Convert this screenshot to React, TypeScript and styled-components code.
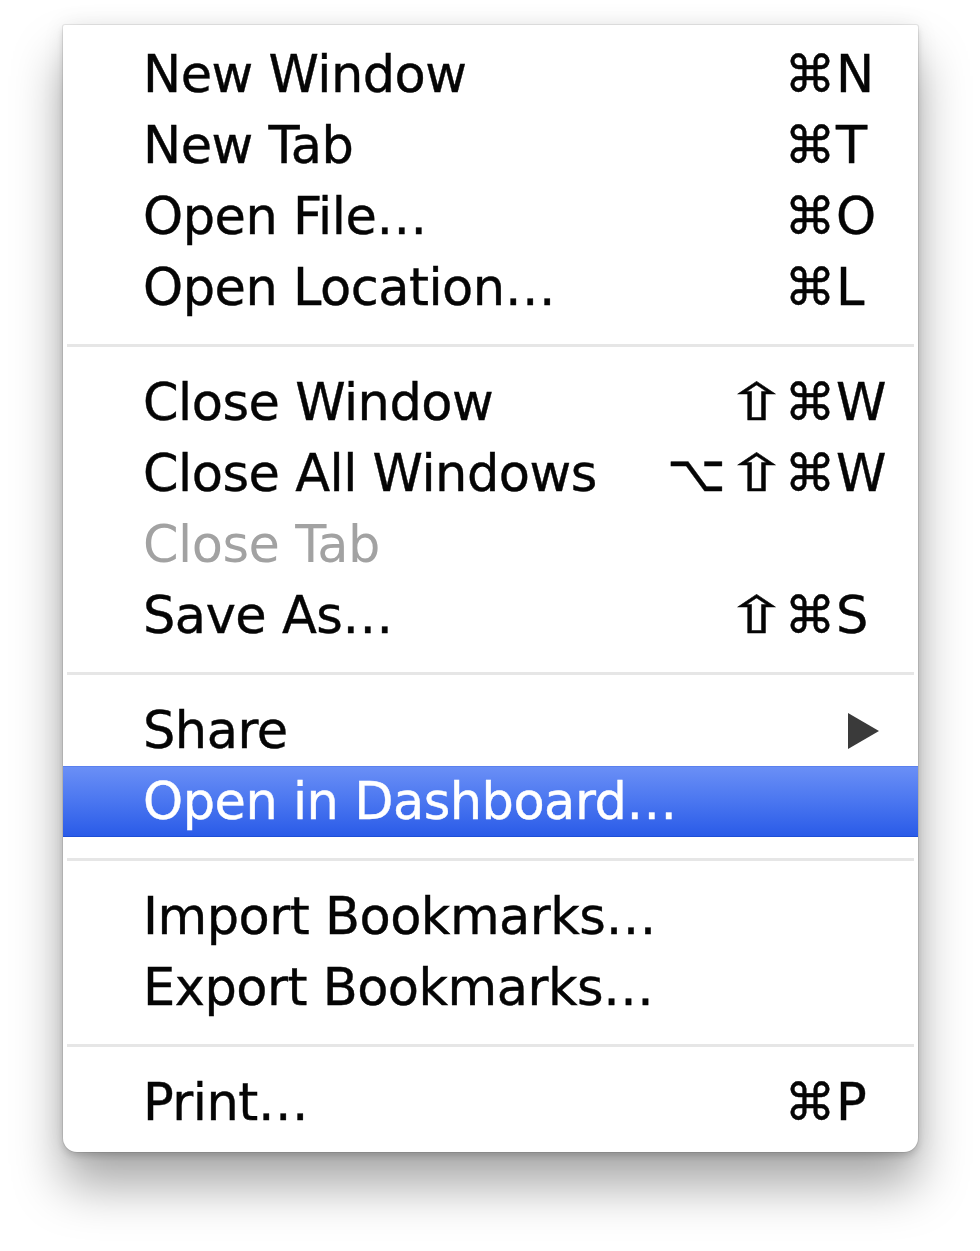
import React from "react";
import styled, { createGlobalStyle } from "styled-components";

const Global = createGlobalStyle`
  html, body { margin: 0; padding: 0; background: #ffffff; }
  body { font-family: "DejaVu Sans", "Lucida Grande", sans-serif; }
`;

const Page = styled.div`
  width: 980px;
  height: 1251px;
  padding: 25px 0 0 63px;
  box-sizing: border-box;
  background: #ffffff;
`;

const Menu = styled.div`
  width: 855px;
  box-sizing: border-box;
  padding: 14px 0 14px 0;
  background: #ffffff;
  border-radius: 2px 2px 14px 14px;
  box-shadow: 0 0 0 1px rgba(0, 0, 0, 0.08), 0 4px 6px rgba(0, 0, 0, 0.14),
    0 34px 50px rgba(0, 0, 0, 0.34), 0 0 22px rgba(0, 0, 0, 0.08);
`;

const Row = styled.div<{ $active?: boolean; $disabled?: boolean }>`
  display: flex;
  align-items: center;
  height: 71px;
  box-sizing: border-box;
  padding: 0 37px 0 80px;
  font-size: 51px;
  letter-spacing: -0.5px;
  color: ${(p) => (p.$active ? "#ffffff" : p.$disabled ? "#a2a2a2" : "#050505")};
  -webkit-text-stroke: ${(p) => (p.$disabled ? "0" : "0.4px")} currentColor;
  background: ${(p) =>
    p.$active ? "linear-gradient(#6a8ff6 0%, #4a76f0 50%, #2a5be8 100%)" : "transparent"};
  border-top: ${(p) => (p.$active ? "1px solid #5a80ee" : "none")};
  border-bottom: ${(p) => (p.$active ? "1px solid #1d4ed6" : "none")};
`;

const Label = styled.span`
  flex: 1;
  white-space: nowrap;
`;

const Mods = styled.span`
  white-space: nowrap;
  display: flex;
  align-items: center;
  gap: 2px;
`;

const Mod = styled.span<{ $wide?: boolean }>`
  display: inline-block;
  transform: ${(p) => (p.$wide ? "scaleX(1.5)" : "none")};
  margin: ${(p) => (p.$wide ? "0 5px 0 8px" : "0")};
`;

const Key = styled.span`
  width: 45px;
  margin-left: 1px;
  white-space: nowrap;
  display: flex;
  align-items: center;
`;

const Separator = styled.div`
  height: 44px;
  display: flex;
  align-items: center;
  padding: 0 4px;
  &::after {
    content: "";
    flex: 1;
    height: 3px;
    background: #e6e6e6;
  }
`;

const Arrow = styled.svg`
  width: 31px;
  height: 36px;
  margin-left: 12px;
`;

type Item = {
  label: string;
  mods?: string;
  key?: string;
  disabled?: boolean;
  active?: boolean;
  submenu?: boolean;
};

const groups: Item[][] = [
  [
    { label: "New Window", mods: "⌘", key: "N" },
    { label: "New Tab", mods: "⌘", key: "T" },
    { label: "Open File…", mods: "⌘", key: "O" },
    { label: "Open Location…", mods: "⌘", key: "L" },
  ],
  [
    { label: "Close Window", mods: "⇧⌘", key: "W" },
    { label: "Close All Windows", mods: "⌥⇧⌘", key: "W" },
    { label: "Close Tab", disabled: true },
    { label: "Save As…", mods: "⇧⌘", key: "S" },
  ],
  [
    { label: "Share", submenu: true },
    { label: "Open in Dashboard…", active: true },
  ],
  [
    { label: "Import Bookmarks…" },
    { label: "Export Bookmarks…" },
  ],
  [{ label: "Print…", mods: "⌘", key: "P" }],
];

export default function App() {
  return (
    <>
      <Global />
      <Page>
        <Menu>
          {groups.map((g, gi) => (
            <React.Fragment key={gi}>
              {gi > 0 && <Separator />}
              {g.map((it) => (
                <Row key={it.label} $active={it.active} $disabled={it.disabled}>
                  <Label>{it.label}</Label>
                  <Mods>
                    {Array.from(it.mods ?? "").map((m, i) => (
                      <Mod key={i} $wide={m === "⇧"}>
                        {m}
                      </Mod>
                    ))}
                  </Mods>
                  <Key>
                    {it.submenu ? (
                      <Arrow viewBox="0 0 31 36">
                        <polygon points="0,0 31,18 0,36" fill="#3a3a3a" />
                      </Arrow>
                    ) : (
                      it.key ?? ""
                    )}
                  </Key>
                </Row>
              ))}
            </React.Fragment>
          ))}
        </Menu>
      </Page>
    </>
  );
}
